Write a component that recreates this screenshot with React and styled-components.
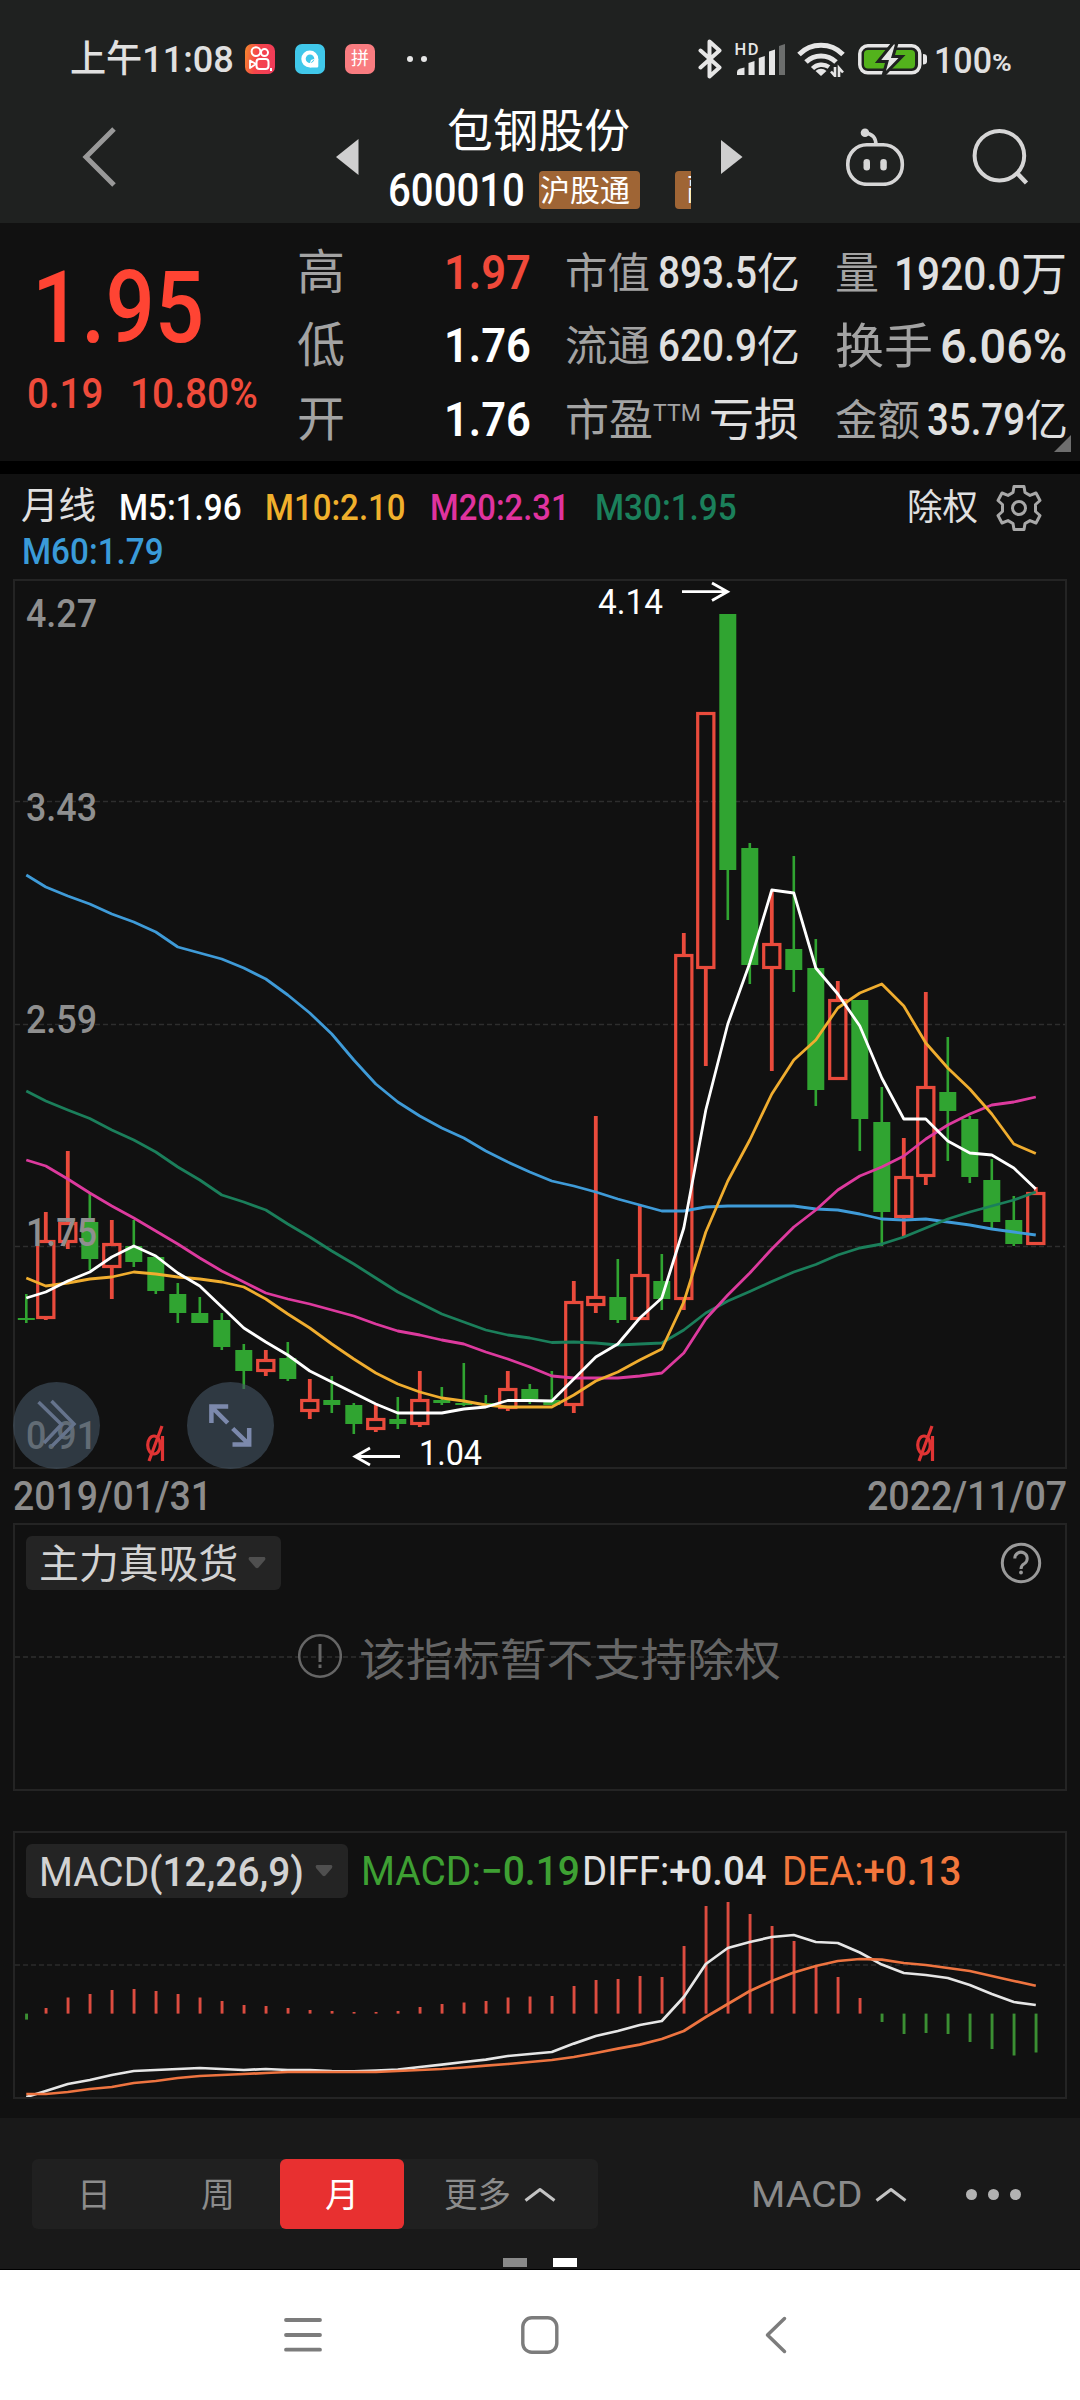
import React, { useLayoutEffect, useRef, useState } from "react";
import styled, { createGlobalStyle } from "styled-components";

const RED = "#ea4b3c";
const GREEN = "#30a431";

// [direction, high, body top, body bottom, low]
const candles = [
  ["g", 1294, 1318, 1320, 1323],
  ["r", 1212, 1240, 1319, 1320],
  ["r", 1151, 1222, 1243, 1249],
  ["g", 1194, 1222, 1259, 1270],
  ["r", 1220, 1243, 1268, 1299],
  ["g", 1220, 1246, 1262, 1267],
  ["g", 1257, 1257, 1291, 1294],
  ["g", 1283, 1294, 1313, 1323],
  ["g", 1297, 1313, 1323, 1323],
  ["g", 1313, 1320, 1347, 1350],
  ["g", 1344, 1350, 1371, 1389],
  ["r", 1350, 1359, 1372, 1376],
  ["g", 1342, 1358, 1379, 1381],
  ["r", 1379, 1399, 1412, 1419],
  ["g", 1376, 1400, 1405, 1413],
  ["g", 1403, 1405, 1424, 1434],
  ["r", 1405, 1418, 1430, 1432],
  ["g", 1397, 1419, 1424, 1429],
  ["r", 1371, 1399, 1425, 1427],
  ["g", 1387, 1400, 1403, 1405],
  ["g", 1363, 1403, 1405, 1406],
  ["g", 1395, 1403, 1405, 1406],
  ["r", 1371, 1388, 1409, 1411],
  ["g", 1384, 1389, 1399, 1404],
  ["g", 1371, 1400, 1405, 1405],
  ["r", 1281, 1301, 1406, 1413],
  ["r", 1116, 1296, 1306, 1313],
  ["g", 1259, 1297, 1320, 1323],
  ["r", 1205, 1274, 1320, 1320],
  ["g", 1254, 1281, 1299, 1310],
  ["r", 933, 954, 1300, 1310],
  ["r", 712, 712, 969, 1066],
  ["g", 614, 614, 870, 920],
  ["g", 843, 848, 965, 984],
  ["r", 891, 943, 969, 1071],
  ["g", 856, 949, 970, 992],
  ["g", 939, 968, 1090, 1106],
  ["r", 981, 999, 1080, 1080],
  ["g", 1000, 1000, 1119, 1151],
  ["g", 1087, 1122, 1212, 1246],
  ["r", 1138, 1176, 1218, 1236],
  ["r", 992, 1086, 1177, 1185],
  ["g", 1037, 1092, 1111, 1161],
  ["g", 1116, 1119, 1177, 1183],
  ["g", 1159, 1180, 1222, 1228],
  ["g", 1196, 1220, 1244, 1246],
  ["r", 1187, 1192, 1245, 1245],
];

const averages = [
  {
    color: "#3f9bd8",
    data: [
      875, 887, 896, 904, 914, 922, 932, 947, 953, 959, 968, 979, 995, 1013,
      1034, 1060, 1084, 1102, 1116, 1128, 1138, 1151, 1162, 1172, 1181, 1186,
      1192, 1199, 1205, 1211, 1211, 1207, 1206, 1206, 1206, 1206, 1209, 1210,
      1214, 1219, 1220, 1219, 1222, 1225, 1229, 1232, 1235,
    ],
  },
  {
    color: "#1b7f5b",
    data: [
      1091, 1101, 1110, 1118.5, 1130, 1140, 1152, 1167, 1180, 1195, 1202, 1210,
      1224, 1237, 1251, 1264, 1278, 1292, 1303, 1314, 1322, 1330, 1335, 1338,
      1342.5, 1342, 1343, 1345, 1344, 1343, 1330, 1313, 1301, 1291.5, 1281.5,
      1272, 1264.5, 1255, 1248, 1244, 1237, 1228, 1219, 1212, 1206, 1200, 1192,
    ],
  },
  {
    color: "#dd3a9e",
    data: [
      1160, 1166, 1179, 1193, 1206, 1218, 1231, 1244, 1258, 1271, 1282, 1293,
      1299, 1304, 1310, 1316, 1324, 1331, 1335, 1340, 1344, 1352, 1359, 1367,
      1376, 1378, 1378, 1378, 1376, 1373, 1353, 1319, 1295, 1273, 1249, 1227,
      1210, 1190, 1176, 1167, 1156, 1139, 1125, 1114, 1105, 1102, 1097,
    ],
  },
  {
    color: "#f0ad2f",
    data: [
      1278, 1286, 1283, 1279, 1277, 1272, 1274, 1277, 1279, 1282, 1287, 1299,
      1314, 1328, 1344, 1359, 1373, 1384, 1392, 1398, 1401, 1405, 1407, 1407,
      1407, 1395, 1381, 1372, 1360, 1349, 1302, 1232, 1181, 1140, 1094, 1060,
      1040, 1008, 993, 984, 1006, 1043, 1068, 1089, 1114, 1144, 1153.5,
    ],
  },
  {
    color: "#ffffff",
    data: [
      1298, 1292, 1281, 1272, 1257, 1246, 1256, 1273, 1286, 1307, 1328, 1342,
      1355, 1371, 1382, 1393, 1404, 1413, 1413, 1413, 1409, 1407, 1400.5,
      1400.5, 1401, 1379, 1357, 1344, 1318, 1298, 1228, 1110, 1024, 963, 890,
      893, 968, 994, 1026, 1078, 1119, 1119, 1141, 1153, 1155, 1168, 1189,
    ],
  },
];

const macdBars = [
  2019.6, 2008, 1997.5, 1994, 1990, 1989, 1991, 1994, 1997.5, 2001, 2005, 2006,
  2008, 2010, 2011, 2012, 2012, 2011, 2007, 2004, 2002.5, 2001, 1997.5, 1996.5,
  1996, 1986, 1980, 1979, 1976, 1977, 1946, 1906, 1902, 1914, 1926, 1941, 1967,
  1977, 1998, 2022, 2034, 2033, 2034, 2042, 2049, 2055.5, 2052.5,
];

const diffLine = [
  2097, 2091, 2084, 2080, 2075, 2071, 2070, 2069, 2068, 2069, 2070, 2069, 2070,
  2070, 2071, 2071.4, 2070.7, 2069.6, 2067, 2064.6, 2062, 2059.6, 2056, 2054,
  2052, 2043.6, 2036, 2031, 2025, 2021, 1997, 1964, 1948, 1942, 1937, 1935,
  1942, 1943, 1952.5, 1964.6, 1973, 1975, 1978, 1985, 1994, 2002, 2005,
];

const deaLine = [
  2094, 2094, 2092, 2089, 2087, 2083, 2081, 2078, 2076, 2075, 2074, 2073, 2072,
  2072, 2072, 2072, 2072, 2071, 2070, 2069, 2067.5, 2065.7, 2064, 2062, 2060,
  2057, 2053, 2048.6, 2044.6, 2039, 2031, 2017, 2004, 1991, 1981, 1972.5, 1966,
  1961, 1959, 1959.6, 1963, 1965, 1968, 1971, 1976, 1981, 1985.7,
];

// the first (partial) month sits a little closer to its neighbour
const xAt = (i) => (i === 0 ? 26.3 : 45.8 + (i - 1) * 22);
const toPoints = (data) => data.map((y, i) => `${xAt(i)},${y}`).join(" ");

// Text squeezed to a fixed width, like the narrow figures of the app
const Fit = ({ w, children, ...rest }) => {
  const ref = useRef(null);
  const [scale, setScale] = useState(1);

  useLayoutEffect(() => {
    setScale(w / ref.current.offsetWidth);
  }, [w, children]);

  return (
    <FitBox $w={w} {...rest}>
      <span ref={ref} style={{ transform: `scaleX(${scale})` }}>
        {children}
      </span>
    </FitBox>
  );
};

const StatusBar = () => (
  <Status>
    <Fit w={164} $size={37} $weight={500} $ml={70} $mt={1}>
      上午11:08
    </Fit>
    <AppBadge $ml={11} $bg='linear-gradient(100deg, #f58a2c, #f5454a 40%, #f03a5c)'>
      <svg width='30' height='30' viewBox='0 0 30 30' fill='none' stroke='#fff'>
        <circle cx='11' cy='7.6' r='4.4' strokeWidth='2' />
        <circle cx='19.5' cy='8.6' r='3.5' strokeWidth='2' />
        <rect x='11.5' y='15' width='12' height='10' rx='3' strokeWidth='2' />
        <path d='M11 20 L5 16.5 V24 Z' strokeWidth='1.8' strokeLinejoin='round' />
        <path d='M26 24 v3' strokeWidth='2' />
      </svg>
    </AppBadge>
    <AppBadge $ml={20} $bg='#40c8ea'>
      <svg width='30' height='30' viewBox='0 0 30 30' fill='#fff'>
        <circle cx='14.800' cy='15' r='8.500' />
        <path d='M15 15 L23.300 15 V22 Q23.300 23.500 22 23.500 H15z' />
        <circle cx='15' cy='14.800' r='4.300' fill='#40c8ea' />
        <path d='M20 14.500 L14.500 20 L16 16z' />
      </svg>
    </AppBadge>
    <AppBadge $ml={20} $bg='#f97c80'>
      拼
    </AppBadge>
    <Dots $ml={32}>
      <i />
      <i />
    </Dots>
    <StatusIcons>
      <svg width='24' height='40' viewBox='0 0 24 40' fill='none' stroke='#e6e6e6' strokeWidth='4' strokeLinejoin='round' strokeLinecap='round'>
        <path d='M2.500 11.500 L21.500 28.500 L11.500 37.500 V2.500 L21.500 11.500 L2.500 28.500' />
      </svg>
      <svg width='51' height='36' viewBox='0 0 51 36' fill='#e6e6e6'>
        <text x='-.5' y='14' fontFamily='Roboto, sans-serif' fontWeight='500' fontSize='16.500' textLength='24'>
          HD
        </text>
        <path d='M2 34 v-3 q0 -2.500 2.500 -3.200 l5 -1.300 V34z' />
        <path d='M13.500 34 V22 l6 -2 V34z' />
        <path d='M23.800 34 V17 l6 -2 V34z' />
        <path d='M34 34 V10.500 l6 -2 V34z' />
        <path d='M44 34 V5 l6 -2 V34z' fill='#6c6e6d' />
      </svg>
      <WifiIcon width='48' height='36' viewBox='0 0 48 36' fill='none' stroke='#e6e6e6' strokeWidth='5'>
        <path d='M2 13.500 A31 31 0 0 1 46 13.500' />
        <path d='M9 21 A21.500 21.500 0 0 1 39 21' />
        <path d='M15.500 27.500 A13 13 0 0 1 32 26' strokeWidth='4.500' />
        <path d='M24 35 l-5.500 -5 a8 8 0 0 1 11 0z' fill='#e6e6e6' stroke='none' />
        <path d='M38 26 v9 l-4 -4.500 M42 36 v-9 l4 4.500' strokeWidth='2.600' />
      </WifiIcon>
      <svg width='70' height='34' viewBox='0 0 70 34'>
        <rect x='1.800' y='3.800' width='60' height='27' rx='8' fill='none' stroke='#e6e6e6' strokeWidth='3.500' />
        <rect x='6' y='8' width='51' height='18.500' rx='4' fill='#53b21c' />
        <path d='M65 12 q4 0 4 3 v4.500 q0 3 -4 3z' fill='#e6e6e6' />
        <path
          d='M35 1 L20 19.500 h9 L25 34 L44 14.500 h-9 L39 1z'
          fill='#e6e6e6'
          stroke='#1f2120'
          strokeWidth='3'
        />
      </svg>
      <Percent>
        <Fit w={58} $size={37.500} $weight={500} $mt={1}>
          100
        </Fit>
        <Fit w={20} $size={24} $weight={700} $mt={8}>
          %
        </Fit>
      </Percent>
    </StatusIcons>
  </Status>
);

const Header = () => (
  <TitleBar>
    <BackIcon width='36' height='62' viewBox='0 0 36 62' fill='none' stroke='#999' strokeWidth='5'>
      <path d='M33 3 L5 31 L33 59' />
    </BackIcon>
    <PrevIcon width='23' height='36' viewBox='0 0 23 36' fill='#cfcfcf'>
      <path d='M22.500 0 V36 L0 18z' />
    </PrevIcon>
    <Stock>
      <Fit w={183} $size={46} $ml={60} $lh={54} $color='#fff'>
        包钢股份
      </Fit>
      <StockCode>
        <Fit w={137} $size={46} $weight={500} $ml={1} $color='#fff'>
          600010
        </Fit>
        <Tags>
          <Tag>
            <Fit w={90} $size={30} $color='#fff' $ml={1} $mt={1}>
              沪股通
            </Fit>
          </Tag>
          <Tag>
            <Fit w={30} $size={30} $color='#fff' $ml={12}>
              融
            </Fit>
          </Tag>
        </Tags>
      </StockCode>
    </Stock>
    <NextIcon width='22' height='34' viewBox='0 0 22 34' fill='#cfcfcf'>
      <path d='M0 0 V34 L21.500 17z' />
    </NextIcon>
    <RobotIcon width='60' height='58' viewBox='0 0 60 58' fill='none' stroke='#d6d6d6' strokeWidth='3.600'>
      <rect x='2.800' y='16.800' width='54.500' height='39.500' rx='19' />
      <path d='M20 5 Q31 6 31 17' />
      <circle cx='20' cy='4.800' r='4.300' fill='#d6d6d6' stroke='none' />
      <rect x='18.500' y='31' width='6.500' height='11.500' rx='3.200' fill='#d6d6d6' stroke='none' />
      <rect x='35.300' y='31' width='6.500' height='11.500' rx='3.200' fill='#d6d6d6' stroke='none' />
    </RobotIcon>
    <SearchIcon width='57' height='57' viewBox='0 0 57 57' fill='none' stroke='#d6d6d6' strokeWidth='4'>
      <circle cx='27.400' cy='27.700' r='24.800' />
      <path d='M44 44 L54.500 55' strokeWidth='4.500' />
    </SearchIcon>
  </TitleBar>
);

const Quote = () => (
  <QuoteBox>
    <Price>
      <Fit w={172} $size={101} $weight={500} $ml={32} $lh={100} $color='#ff4433'>
        1.95
      </Fit>
      <Line>
        <Fit w={76} $size={42.500} $ml={27} $weight={500} $color='#ef4b3b'>
          0.19
        </Fit>
        <Fit w={128} $size={42.500} $ml={27} $weight={500} $color='#ef4b3b'>
          10.80%
        </Fit>
      </Line>
    </Price>
    <Stats>
      {[
        ["高", "1.97", "#f0493a"],
        ["低", "1.76", "#fff"],
        ["开", "1.76", "#fff"],
      ].map(([name, value, color]) => (
        <StatRow key={name}>
          <Fit w={48} $size={48} $color='#a3a3a3'>
            {name}
          </Fit>
          <Fit w={87} $size={49} $weight={600} $ml={99} $color={color}>
            {value}
          </Fit>
        </StatRow>
      ))}
    </Stats>
    <Stats $ml={34} $mt={1}>
      {[
        ["市值", "893.5"],
        ["流通", "620.9"],
      ].map(([name, value]) => (
        <StatRow key={name}>
          <Fit w={85} $size={42.500} $color='#a3a3a3'>
            {name}
          </Fit>
          <Fit w={99} $size={43.500} $weight={500} $ml={8}>
            {value}
          </Fit>
          <Fit w={43} $size={43}>
            亿
          </Fit>
        </StatRow>
      ))}
      <StatRow>
        <Fit w={88} $size={44} $color='#a3a3a3'>
          市盈
        </Fit>
        <Fit w={48} $size={24.500} $color='#a3a3a3' $mb={16}>
          TTM
        </Fit>
        <Fit w={90} $size={45} $ml={8}>
          亏损
        </Fit>
      </StatRow>
    </Stats>
    <Stats $ml={35} $mt={1}>
      <StatRow>
        <Fit w={44} $size={44} $color='#a3a3a3'>
          量
        </Fit>
        <Fit w={127} $size={47} $weight={500} $ml={15}>
          1920.0
        </Fit>
        <Fit w={46} $size={46}>
          万
        </Fit>
      </StatRow>
      <StatRow>
        <Fit w={98} $size={48} $color='#a3a3a3'>
          换手
        </Fit>
        <Fit w={127} $size={49} $weight={500} $ml={7}>
          6.06%
        </Fit>
      </StatRow>
      <StatRow>
        <Fit w={85} $size={42.500} $color='#a3a3a3'>
          金额
        </Fit>
        <Fit w={98} $size={43.500} $weight={500} $ml={7}>
          35.79
        </Fit>
        <Fit w={43} $size={43}>
          亿
        </Fit>
      </StatRow>
    </Stats>
    <Corner />
  </QuoteBox>
);

const Averages = () => (
  <Legend>
    <Line>
      <Fit w={75} $size={37} $ml={21} $mb={1}>
        月线
      </Fit>
      <Fit w={123} $size={37} $ml={23} $weight={500} $color='#fff'>
        M5:1.96
      </Fit>
      <Fit w={141} $size={37} $ml={23} $weight={500} $color='#f0b02c'>
        M10:2.10
      </Fit>
      <Fit w={140} $size={37} $ml={24} $weight={500} $color='#e0339f'>
        M20:2.31
      </Fit>
      <Fit w={142} $size={37} $ml={25} $weight={500} $color='#1b805b'>
        M30:1.95
      </Fit>
      <Fit w={71} $size={36} $ml={170}>
        除权
      </Fit>
      <GearIcon width='46' height='46' viewBox='-23 -23 46 46' fill='none' stroke='#a8a8a8' strokeWidth='3' strokeLinejoin='round'>
        <path d='M-5 -21.500 H5 L6 -15.500 L11 -12.600 L17 -15 L21 -7.500 L16.500 -3.500 V3.500 L21 7.500 L17 15 L11 12.600 L6 15.500 L5 21.500 H-5 L-6 15.500 L-11 12.600 L-17 15 L-21 7.500 L-16.500 3.500 V-3.500 L-21 -7.500 L-17 -15 L-11 -12.600 L-6 -15.500 Z' />
        <circle r='6.500' />
      </GearIcon>
    </Line>
    <Fit w={142} $size={37} $ml={22} $mt={-2} $weight={500} $color='#3a9bd9'>
      M60:1.79
    </Fit>
  </Legend>
);

const Candle = ({ i, data }) => {
  const [dir, high, top, bottom, low] = data;
  const x = xAt(i);
  if (dir === "g") {
    return (
      <g fill={GREEN}>
        <rect x={x - 1.3} y={high} width='2.600' height={low - high} />
        <rect x={x - 8.5} y={top} width='17' height={bottom - top} />
      </g>
    );
  }
  return (
    <g stroke={RED} strokeWidth='3.200' fill='none'>
      <path d={`M${x} ${high}V${top + 1}M${x} ${bottom - 1}V${low}`} strokeWidth='3.800' />
      <rect x={x - 8.1} y={top + 1.5} width='16.200' height={bottom - top - 3} />
    </g>
  );
};

const ExRight = ({ x }) => (
  <g stroke='#e03434' strokeWidth='3.200' fill='none'>
    <ellipse cx={x - 1} cy='1445' rx='6.300' ry='9' />
    <path d={`M${x + 7} 1426 L${x - 6} 1461 M${x + 7.5} 1436 V1461`} />
  </g>
);

const KLine = () => (
  <Frame $h={890}>
    <PriceChart width='1050' height='886' viewBox='15 581 1050 886'>
      <g stroke='#2e2e2e' strokeWidth='1.400' strokeDasharray='5 3'>
        <path d='M15 801.500H1065' />
        <path d='M15 1024.500H1065' />
        <path d='M15 1246.500H1065' />
      </g>
      {candles.map((c, i) => (
        <Candle key={i} i={i} data={c} />
      ))}
      <g fill='none' strokeWidth='2.800' strokeLinejoin='round'>
        {averages.map((line) => (
          <polyline key={line.color} points={toPoints(line.data)} stroke={line.color} />
        ))}
      </g>
      <g fill='#8f8f8f' fontFamily='Roboto, sans-serif' fontWeight='500' fontSize='39.500'>
        {[
          ["4.27", 627],
          ["3.43", 821],
          ["2.59", 1033],
          ["1.75", 1246],
          ["0.91", 1449],
        ].map(([label, y]) => (
          <text key={label} x='26' y={y} textLength='71' lengthAdjust='spacingAndGlyphs'>
            {label}
          </text>
        ))}
      </g>
      <g fill='#fff' fontFamily='Roboto, sans-serif' fontSize='34.500'>
        <text x='598' y='614' textLength='65' lengthAdjust='spacingAndGlyphs'>
          4.14
        </text>
        <text x='419' y='1464.500' textLength='63' lengthAdjust='spacingAndGlyphs'>
          1.04
        </text>
      </g>
      <g stroke='#fff' strokeWidth='2.800' fill='none'>
        <path d='M682 591.700H727 M712 583L727.500 591.700L712 600.500' />
        <path d='M400 1456.500H356 M370 1448L355 1456.500L370 1465' />
      </g>
      <ExRight x={155} />
      <ExRight x={925} />
    </PriceChart>
    <RoundButton $left={-2}>
      <svg width='87' height='87' viewBox='13 1382 87 87' fill='none' stroke='#65738c' strokeWidth='3.500'>
        <path d='M38.500 1402 L61.500 1424.500 L44 1443 M51.500 1401 L74 1424 L52 1446' />
      </svg>
    </RoundButton>
    <RoundButton $left={172}>
      <svg width='87' height='87' viewBox='187.300 1382 87 87' fill='none' stroke='#7c89ac' strokeWidth='4.500'>
        <path d='M228.500 1406.500 H211.700 V1423 M212 1407 L228 1423' />
        <path d='M232.800 1444.500 H249.500 V1428 M249 1444 L233 1428.500' />
      </svg>
    </RoundButton>
  </Frame>
);

const Caret = () => (
  <svg width='18' height='12' viewBox='0 0 18 12' fill='#4f4f4f'>
    <path d='M1.500 0 H16.500 Q18 1 17 3 L10.500 10.500 Q9 12 7.500 10.500 L1 3 Q0 1 1.500 0z' />
  </svg>
);

const Indicator = () => (
  <Frame $h={268} $mt={28}>
    <MidLine />
    <IndicatorHead>
      <Picker $w={255}>
        <Fit w={200} $size={39.500} $mt={3} $color='#d2d2d2'>
          主力真吸货
        </Fit>
        <Caret />
      </Picker>
      <svg width='42' height='42' viewBox='-21 -21 42 42' fill='none' stroke='#9a9a9a' strokeWidth='3'>
        <circle r='18.700' />
        <path d='M-6.200 -4.500 A6.200 6.200 0 1 1 3.500 .5 Q0 2.500 0 6' />
        <circle cy='9.500' r='1.900' fill='#9a9a9a' stroke='none' />
      </svg>
    </IndicatorHead>
    <Notice>
      <svg width='44' height='46' viewBox='-22 -23 44 46' fill='none' stroke='#666' strokeWidth='2.500'>
        <circle r='20.800' />
        <path d='M0 -12 V6 M0 8.500 V12' strokeWidth='3' />
      </svg>
      <NoticeText>
        <Fit w={422} $size={44} $ml={17} $color='#666'>
          该指标暂不支持除权
        </Fit>
      </NoticeText>
    </Notice>
  </Frame>
);

const Macd = () => (
  <Frame $h={268} $mt={40}>
    <MacdChart width='1050' height='264' viewBox='15 1833 1050 264'>
      <path d='M15 1965H1065' stroke='#2b2b2b' strokeWidth='1.600' strokeDasharray='5 3' />
      {macdBars.map((y, i) => (
        <rect
          key={i}
          x={xAt(i) - 1.2}
          y={Math.min(y, 2013.6)}
          width='2.900'
          height={Math.abs(y - 2013.6)}
          fill={y > 2013.6 ? "#3b8f33" : "#dc4c40"}
        />
      ))}
      <g fill='none' strokeWidth='2.700' strokeLinejoin='round'>
        <polyline points={toPoints(diffLine)} stroke='#e6e6e6' />
        <polyline points={toPoints(deaLine)} stroke='#ee7440' />
      </g>
    </MacdChart>
    <MacdHead>
      <Picker $w={322}>
        <Fit w={265} $size={40} $mt={3} $color='#d2d2d2'>
          MACD<b>(12,26,9)</b>
        </Fit>
        <Caret />
      </Picker>
      <Fit w={219} $size={40} $ml={13} $mt={1} $color='#3ea033'>
        MACD:<b>−0.19</b>
      </Fit>
      <Fit w={185} $size={40} $ml={2} $mt={1} $color='#e2e2e2'>
        DIFF:<b>+0.04</b>
      </Fit>
      <Fit w={179} $size={40} $ml={15} $mt={1} $color='#f3773c'>
        DEA:<b>+0.13</b>
      </Fit>
    </MacdHead>
  </Frame>
);

const Up = () => (
  <svg width='32' height='15' viewBox='0 0 32 15' fill='none' stroke='#c4c4c4' strokeWidth='3'>
    <path d='M1.500 13.500 L16 2.500 L30.500 13.500' strokeLinejoin='round' />
  </svg>
);

const Toolbar = () => (
  <Bottom>
    <Tools>
      <Periods>
        {["日", "周", "月"].map((p) => (
          <Period key={p} $active={p === "月"}>
            {p}
          </Period>
        ))}
        <More>
          <Fit w={67} $size={34} $mt={2} $color='#8c8c8c'>
            更多
          </Fit>
          <Up />
        </More>
      </Periods>
      <Fit w={112} $size={36.500} $ml={153} $mt={2} $color='#8a8a8a'>
        MACD
      </Fit>
      <UpWrap>
        <Up />
      </UpWrap>
      <Ellipsis>
        <i />
        <i />
        <i />
      </Ellipsis>
    </Tools>
    <Pager>
      <i />
      <i />
    </Pager>
  </Bottom>
);

const SystemNav = () => (
  <SystemBar>
    <svg width='38' height='36' viewBox='0 0 38 36' stroke='#7c7c7c' strokeWidth='3.800' strokeLinecap='round'>
      <path d='M2 3H36M2 18H36M2 32.700H36' />
    </svg>
    <svg width='38' height='38' viewBox='0 0 38 38' fill='none' stroke='#7c7c7c' strokeWidth='3.400'>
      <rect x='1.800' y='1.800' width='34' height='34.500' rx='9' />
    </svg>
    <svg width='38' height='38' viewBox='0 0 38 38' fill='none' stroke='#7c7c7c' strokeWidth='3.500' strokeLinecap='round' strokeLinejoin='round'>
      <path d='M26.500 2.500 L9.500 19 L26.500 35.500' />
    </svg>
  </SystemBar>
);

const App = () => (
  <Screen>
    <GlobalStyle />
    <Top>
      <StatusBar />
      <Header />
    </Top>
    <Quote />
    <Charts>
      <Averages />
      <KLine />
      <Dates>
        <Fit w={199} $size={40} $weight={500} $color='#8c8c8c'>
          2019/01/31
        </Fit>
        <Fit w={200} $size={40} $weight={500} $color='#8c8c8c'>
          2022/11/07
        </Fit>
      </Dates>
      <Indicator />
      <Macd />
    </Charts>
    <Toolbar />
    <SystemNav />
  </Screen>
);

const GlobalStyle = createGlobalStyle`
  * {
    box-sizing: border-box;
  }
  body {
    margin: 0;
    background: #111;
  }
  svg {
    display: block;
    flex: none;
  }
  i {
    display: block;
  }
`;

const Screen = styled.div`
  width: 1080px;
  height: 2400px;
  overflow: hidden;
  display: flex;
  flex-direction: column;
  background: #111;
  font-family: Roboto, "Noto Sans CJK SC", sans-serif;
  color: #e0e0e0;
`;

const FitBox = styled.div`
  flex: none;
  width: ${(p) => p.$w}px;
  margin-left: ${(p) => p.$ml || 0}px;
  margin-top: ${(p) => p.$mt || 0}px;
  margin-bottom: ${(p) => p.$mb || 0}px;
  font-size: ${(p) => p.$size}px;
  font-weight: ${(p) => p.$weight || 400};
  line-height: ${(p) => p.$lh || 46}px;
  height: ${(p) => p.$lh || 46}px;
  color: ${(p) => p.$color || "#e0e0e0"};

  span {
    display: inline-block;
    white-space: nowrap;
    transform-origin: left center;
  }
  b {
    font-weight: 500;
  }
`;

const Line = styled.div`
  display: flex;
  align-items: center;
`;

const Top = styled.div`
  height: 223px;
  flex: none;
  background: #1f2120;
`;

const Status = styled.div`
  height: 78px;
  padding-top: 40px;
  display: flex;
  align-items: center;
`;

const AppBadge = styled.div`
  width: 30px;
  height: 30px;
  border-radius: 7px;
  margin-left: ${(p) => p.$ml}px;
  background: ${(p) => p.$bg};
  color: #fff;
  font-size: 18px;
  line-height: 30px;
  text-align: center;
`;

const Dots = styled.div`
  display: flex;
  gap: 8px;
  margin-left: ${(p) => p.$ml}px;
  i {
    width: 6px;
    height: 6px;
    border-radius: 50%;
    background: #e6e6e6;
  }
`;

const StatusIcons = styled.div`
  display: flex;
  align-items: center;
  gap: 13px;
  margin-left: auto;
  padding-right: 68px;
`;

const WifiIcon = styled.svg`
  margin: 0 0 0 -2px;
`;

const Percent = styled.div`
  display: flex;
  align-items: center;
  margin-left: -7px;
`;

const TitleBar = styled.div`
  height: 145px;
  padding-left: 81px;
  display: flex;
  align-items: flex-start;
`;

const BackIcon = styled.svg`
  margin-top: 48px;
`;

const PrevIcon = styled.svg`
  margin: 61px 0 0 219px;
`;

const Stock = styled.div`
  width: 304px;
  margin-left: 28px;
  padding-top: 26px;
`;

const StockCode = styled.div`
  display: flex;
  align-items: center;
  margin-top: 9px;
  height: 46px;
`;

const Tags = styled.div`
  display: flex;
  gap: 35px;
  width: 152px;
  margin-left: 14px;
  overflow: hidden;
`;

const Tag = styled.div`
  flex: none;
  height: 38px;
  min-width: 101px;
  border-radius: 4px;
  background: #9f6535;
  display: flex;
  align-items: center;
`;

const NextIcon = styled.svg`
  margin: 62px 0 0 30px;
`;

const RobotIcon = styled.svg`
  margin: 50px 0 0 102px;
`;

const SearchIcon = styled.svg`
  margin: 50px 0 0 67px;
`;

const QuoteBox = styled.div`
  position: relative;
  flex: none;
  height: 251px;
  padding-top: 13px;
  border-bottom: 13px solid #000;
  display: flex;
`;

const Price = styled.div`
  width: 297px;
  padding-top: 22px;
  ${Line} {
    margin-top: 13px;
  }
`;

const Stats = styled.div`
  margin-left: ${(p) => p.$ml || 0}px;
  margin-top: ${(p) => p.$mt || 0}px;
`;

const StatRow = styled.div`
  height: 73.5px;
  display: flex;
  align-items: center;
`;

const Corner = styled.div`
  position: absolute;
  right: 9px;
  bottom: 9px;
  border-left: 17px solid transparent;
  border-bottom: 17px solid #6e6e6e;
`;

const Charts = styled.div`
  flex: none;
  height: 1644px;
  padding: 0 13px;
`;

const Legend = styled.div`
  height: 105px;
  margin: 0 -13px;
  padding-top: 10px;
`;

const GearIcon = styled.svg`
  margin-left: 18px;
`;

const Frame = styled.div`
  position: relative;
  width: 1054px;
  height: ${(p) => p.$h}px;
  margin-top: ${(p) => p.$mt || 0}px;
  border: 2px solid #242424;
`;

const PriceChart = styled.svg`
  overflow: visible;
`;

const RoundButton = styled.div`
  position: absolute;
  left: ${(p) => p.$left}px;
  bottom: -2px;
  width: 87px;
  height: 87px;
  border-radius: 50%;
  background: rgba(69, 85, 100, 0.6);
`;

const Dates = styled.div`
  display: flex;
  justify-content: space-between;
  height: 26px;
  padding-top: 5px;
`;

const MidLine = styled.div`
  position: absolute;
  left: 0;
  right: 0;
  top: 131px;
  height: 2px;
  background: repeating-linear-gradient(90deg, #272727 0 5px, transparent 5px 8px);
`;

const IndicatorHead = styled.div`
  display: flex;
  justify-content: space-between;
  align-items: center;
  padding: 11px 23px 0 11px;
`;

const Picker = styled.div`
  width: ${(p) => p.$w}px;
  height: 54px;
  padding: 0 15px 0 13px;
  border-radius: 6px;
  background: #242424;
  display: flex;
  align-items: center;
  justify-content: space-between;
`;

const Notice = styled.div`
  position: relative;
  display: flex;
  align-items: flex-start;
  margin: 43px 0 0 283px;
`;

const NoticeText = styled.div`
  padding-top: 5px;
`;

const MacdChart = styled.svg`
  position: absolute;
  left: 0;
  top: 0;
`;

const MacdHead = styled.div`
  position: relative;
  display: flex;
  align-items: center;
  padding: 11px 0 0 11px;
`;

const Bottom = styled.div`
  flex: none;
  height: 152px;
  padding: 41px 0 0 32px;
  background: #191919;
  border-bottom: 1px solid #000;
`;

const Tools = styled.div`
  display: flex;
  align-items: center;
`;

const Periods = styled.div`
  width: 566px;
  height: 70px;
  border-radius: 6px;
  background: #202020;
  display: flex;
`;

const Period = styled.div`
  width: 124px;
  height: 70px;
  border-radius: 6px;
  font-size: 34px;
  line-height: 73px;
  text-align: center;
  color: ${(p) => (p.$active ? "#fff" : "#8c8c8c")};
  background: ${(p) => (p.$active ? "#e83030" : "transparent")};
`;

const More = styled.div`
  display: flex;
  align-items: center;
  gap: 13px;
  padding-left: 40px;
`;

const UpWrap = styled.div`
  margin-left: 12px;
`;

const Ellipsis = styled.div`
  display: flex;
  gap: 11px;
  margin-left: 59px;
  i {
    width: 11px;
    height: 11px;
    border-radius: 50%;
    background: #b2b2b2;
  }
`;

const Pager = styled.div`
  display: flex;
  gap: 26px;
  margin: 29px 0 0 471px;
  i {
    width: 24px;
    height: 9px;
    background: #8a8a8a;
  }
  i + i {
    background: #fff;
  }
`;

const SystemBar = styled.div`
  flex: 1;
  display: flex;
  justify-content: center;
  align-items: center;
  gap: 199px;
  background: #fff;
`;

export default App;
